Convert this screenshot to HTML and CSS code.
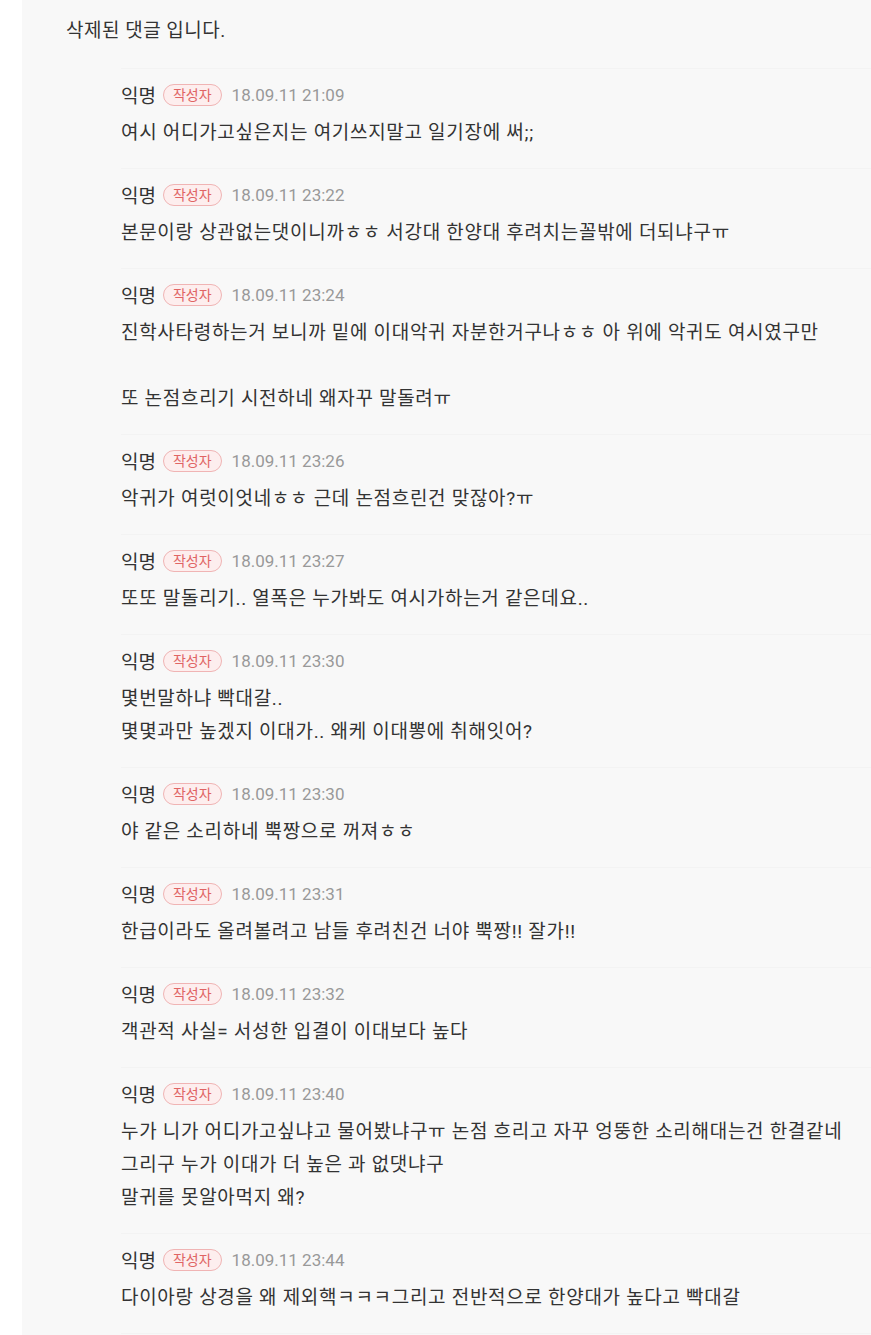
FILE: index.html
```html
<!DOCTYPE html>
<html lang="ko">
<head>
    <meta charset="UTF-8">
    <title>댓글</title>
    <link rel="stylesheet" href="styles.css">
</head>
<body>
    <div class="comments">
        <div class="comment-main">삭제된 댓글 입니다.</div>

        <div class="reply">
            <div class="reply-head"><span class="name">익명</span><span class="badge">작성자</span><span class="date">18.09.11 21:09</span></div>
            <div class="reply-text">여시 어디가고싶은지는 여기쓰지말고 일기장에 써;;</div>
        </div>
        <div class="reply">
            <div class="reply-head"><span class="name">익명</span><span class="badge">작성자</span><span class="date">18.09.11 23:22</span></div>
            <div class="reply-text">본문이랑 상관없는댓이니까ㅎㅎ 서강대 한양대 후려치는꼴밖에 더되냐구ㅠ</div>
        </div>
        <div class="reply">
            <div class="reply-head"><span class="name">익명</span><span class="badge">작성자</span><span class="date">18.09.11 23:24</span></div>
            <div class="reply-text">진학사타령하는거 보니까 밑에 이대악귀 자분한거구나ㅎㅎ 아 위에 악귀도 여시였구만<br><br>또 논점흐리기 시전하네 왜자꾸 말돌려ㅠ</div>
        </div>
        <div class="reply">
            <div class="reply-head"><span class="name">익명</span><span class="badge">작성자</span><span class="date">18.09.11 23:26</span></div>
            <div class="reply-text">악귀가 여럿이엇네ㅎㅎ 근데 논점흐린건 맞잖아?ㅠ</div>
        </div>
        <div class="reply">
            <div class="reply-head"><span class="name">익명</span><span class="badge">작성자</span><span class="date">18.09.11 23:27</span></div>
            <div class="reply-text">또또 말돌리기.. 열폭은 누가봐도 여시가하는거 같은데요..</div>
        </div>
        <div class="reply">
            <div class="reply-head"><span class="name">익명</span><span class="badge">작성자</span><span class="date">18.09.11 23:30</span></div>
            <div class="reply-text">몇번말하냐 빡대갈..<br>몇몇과만 높겠지 이대가.. 왜케 이대뽕에 취해잇어?</div>
        </div>
        <div class="reply">
            <div class="reply-head"><span class="name">익명</span><span class="badge">작성자</span><span class="date">18.09.11 23:30</span></div>
            <div class="reply-text">야 같은 소리하네 뿍짱으로 꺼져ㅎㅎ</div>
        </div>
        <div class="reply">
            <div class="reply-head"><span class="name">익명</span><span class="badge">작성자</span><span class="date">18.09.11 23:31</span></div>
            <div class="reply-text">한급이라도 올려볼려고 남들 후려친건 너야 뿍짱!! 잘가!!</div>
        </div>
        <div class="reply">
            <div class="reply-head"><span class="name">익명</span><span class="badge">작성자</span><span class="date">18.09.11 23:32</span></div>
            <div class="reply-text">객관적 사실= 서성한 입결이 이대보다 높다</div>
        </div>
        <div class="reply">
            <div class="reply-head"><span class="name">익명</span><span class="badge">작성자</span><span class="date">18.09.11 23:40</span></div>
            <div class="reply-text">누가 니가 어디가고싶냐고 물어봤냐구ㅠ 논점 흐리고 자꾸 엉뚱한 소리해대는건 한결같네<br>그리구 누가 이대가 더 높은 과 없댓냐구<br>말귀를 못알아먹지 왜?</div>
        </div>
        <div class="reply">
            <div class="reply-head"><span class="name">익명</span><span class="badge">작성자</span><span class="date">18.09.11 23:44</span></div>
            <div class="reply-text">다이아랑 상경을 왜 제외핵ㅋㅋㅋ그리고 전반적으로 한양대가 높다고 빡대갈</div>
        </div>
        <div class="reply"></div>
    </div>
</body>
</html>
```

FILE: styles.css
```css
body {
    margin: 0;
    background-color: #fff;
    font-family: Roboto, "Noto Sans CJK KR", sans-serif;
    color: #333;
}
.comments {
    margin-left: 22px;
    background-color: #f8f8f8;
    padding-left: 44px;
    min-height: 1335px;
}
.comment-main {
    padding: 14px 0 21px;
    font-size: 19px;
    line-height: 33px;
    letter-spacing: 0.5px;
}
.reply {
    margin-left: 55px;
    border-top: 1px solid #f3f3f3;
    padding: 13px 0 19px;
}
.reply-head {
    display: flex;
    align-items: center;
    height: 25px;
    margin-bottom: 9px;
}
.name {
    font-size: 19px;
    color: #333;
}
.badge {
    margin: 0 10px 0 7px;
    padding: 0 9px;
    height: 20px;
    line-height: 20px;
    font-size: 14px;
    color: #e06464;
    background-color: #fdeeee;
    border: 1px solid #f0b4b4;
    border-radius: 11px;
}
.date {
    font-size: 17px;
    color: #999;
}
.reply-text {
    font-size: 19px;
    line-height: 33px;
    letter-spacing: 0.7px;
    color: #333;
}
```
